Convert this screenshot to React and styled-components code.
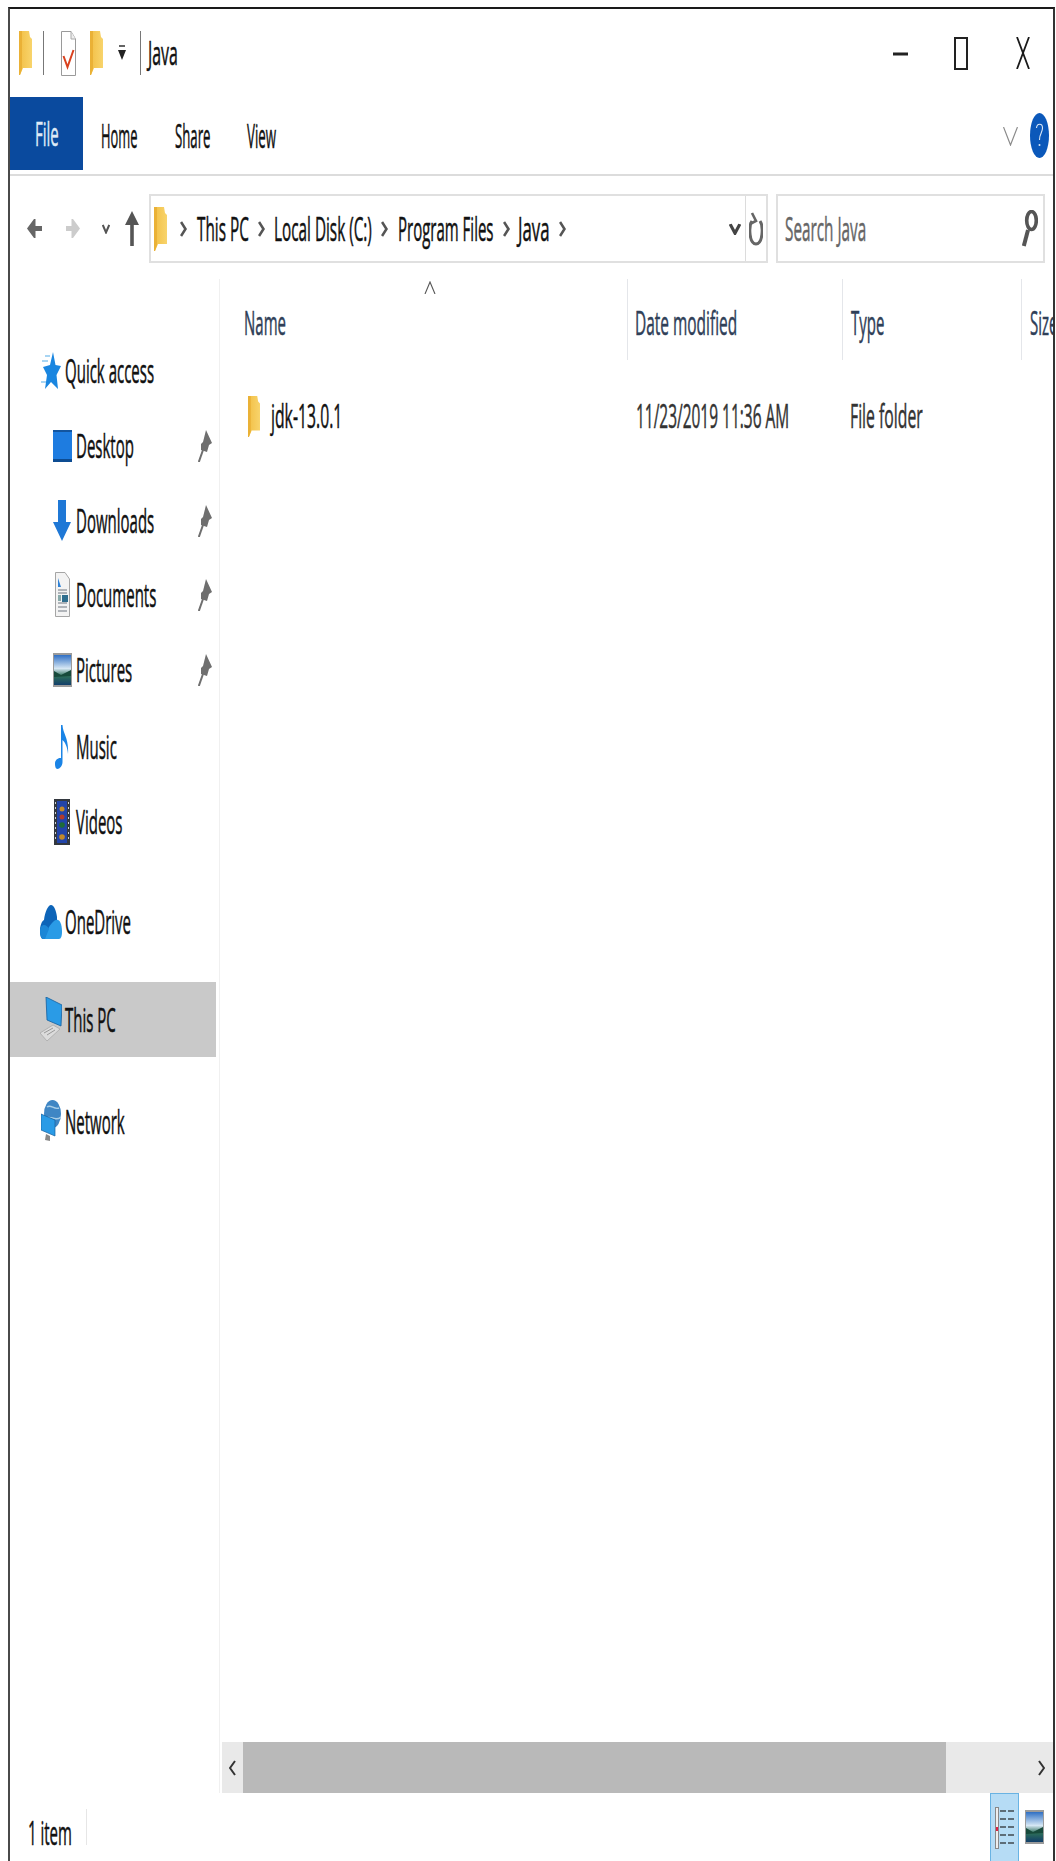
import React from "react";
import styled, { createGlobalStyle } from "styled-components";

const Global = createGlobalStyle`
  html, body { margin: 0; padding: 0; background: #fff; overflow: hidden; }
  #root { width: 1056px; height: 1861px; }
`;

const Win = styled.div`
  box-sizing: border-box;
  width: 1047px;
  height: 1854px;
  margin: 7px 0 0 8px;
  border-top: 2px solid #1a1a1a;
  border-left: 2px solid #4a4a4a;
  border-right: 2px solid #333;
  display: flex;
  flex-direction: column;
  font-family: "Open Sans", "Liberation Sans", sans-serif;
  color: #111;
  overflow: hidden;
`;

const LabelBox = styled.span`
  display: block;
  flex: none;
  width: ${(p) => p.$w}px;
  margin-left: ${(p) => p.$ml || 0}px;
  height: 42px;
  line-height: 42px;
  font-size: 32px;
  color: ${(p) => p.$color || "inherit"};
  white-space: nowrap;
`;

// The window is stretched tall, so each text run is condensed along x only.
const Squeezed = styled.span`
  display: inline-block;
  -webkit-text-stroke: 0.5px currentColor;
  transform: scaleX(${(p) => p.$sx});
  transform-origin: 0 50%;
`;

const Label = ({ w, ml, color, fit = 1, children }) => (
  <LabelBox $w={w} $ml={ml} $color={color}>
    <Squeezed $sx={0.469 * fit}>{children}</Squeezed>
  </LabelBox>
);

const Slot = styled.span`
  display: block;
  flex: none;
  line-height: 0;
  margin-left: ${(p) => p.$ml || 0}px;
  margin-right: ${(p) => p.$mr || 0}px;
  margin-top: ${(p) => p.$mt || 0}px;
  ${(p) => (p.$auto ? "margin-left: auto;" : "")}
`;

const TitleBar = styled.div`
  flex: none;
  height: 88px;
  display: flex;
  align-items: center;
  padding-right: 23px;
`;

const VSep = styled.span`
  display: block;
  flex: none;
  width: 1px;
  height: 44px;
  background: #777;
  margin-left: ${(p) => p.$ml}px;
`;

const Ribbon = styled.div`
  flex: none;
  box-sizing: border-box;
  height: 79px;
  display: flex;
  align-items: flex-start;
  border-bottom: 2px solid #dcdcdc;
  padding-right: 4px;
`;

const FileTab = styled.div`
  flex: none;
  width: 75px;
  height: 73px;
  margin-left: -2px;
  padding-left: 27px;
  box-sizing: border-box;
  background: #0a4a9e;
  color: #dfeaf7;
  display: flex;
  align-items: center;
`;

const Tab = styled.div`
  height: 78px;
  display: flex;
  align-items: center;
`;

const AddressRow = styled.div`
  flex: none;
  box-sizing: border-box;
  height: 103px;
  padding: 18px 0 16px;
  display: flex;
  align-items: center;
`;

const Field = styled.div`
  flex: none;
  box-sizing: border-box;
  height: 69px;
  width: ${(p) => p.$w}px;
  margin-left: ${(p) => p.$ml}px;
  border: 2px solid #e0e0e0;
  display: flex;
  align-items: center;
`;

const Refresh = styled.div`
  flex: none;
  box-sizing: border-box;
  width: 21px;
  height: 100%;
  margin-left: 4px;
  border-left: 1px solid #dcdcdc;
  display: flex;
  align-items: center;
  justify-content: center;
`;

const Body = styled.div`
  flex: 1;
  min-height: 0;
  display: flex;
`;

const Sidebar = styled.nav`
  flex: none;
  box-sizing: border-box;
  width: 210px;
  padding-top: 54px;
  border-right: 1px solid #f0f0f0;
`;

const NavRow = styled.div`
  box-sizing: border-box;
  width: 206px;
  height: 75px;
  display: flex;
  align-items: center;
  margin-top: ${(p) => p.$mt || 0}px;
  padding-left: ${(p) => (p.$child ? 42 : 30)}px;
  padding-right: 4px;
  background: ${(p) => (p.$active ? "#c9c9c9" : "transparent")};
`;

const IconSlot = styled.span`
  flex: none;
  width: ${(p) => (p.$child ? 20 : 22)}px;
  margin-right: ${(p) => (p.$child ? 4 : 3)}px;
  display: flex;
  justify-content: center;
  align-items: center;
  line-height: 0;
`;

const Main = styled.main`
  flex: 1;
  min-width: 0;
  display: flex;
  flex-direction: column;
  overflow: hidden;
`;

const Columns = styled.div`
  display: grid;
  grid-template-columns: 407px 215px 179px 1fr;
  height: ${(p) => p.$h}px;
  margin-top: ${(p) => p.$mt || 0}px;
`;

const HeadCell = styled.div`
  position: relative;
  display: flex;
  align-items: center;
  padding-top: 6px;
  padding-left: ${(p) => p.$pl}px;
  border-left: ${(p) => (p.$sep ? "1px solid #e4e6ea" : "none")};
  color: #2f4058;
  overflow: hidden;
`;

const SortMark = styled.span`
  position: absolute;
  left: 204px;
  top: 2px;
  line-height: 0;
`;

const Cell = styled.div`
  display: flex;
  align-items: center;
  padding-left: ${(p) => p.$pl}px;
  color: ${(p) => p.$color || "inherit"};
`;

const Files = styled.div`
  flex: 1;
`;

const HScroll = styled.div`
  flex: none;
  height: 51px;
  margin-left: 2px;
  background: #e9e9e9;
  display: flex;
  align-items: center;
`;

const Thumb = styled.div`
  flex: none;
  align-self: stretch;
  width: 703px;
  margin-left: 7px;
  background: #b9b9b9;
`;

const StatusBar = styled.footer`
  flex: none;
  height: 68px;
  display: flex;
  align-items: center;
  padding-right: 9px;
`;

const StatusText = styled.div`
  flex: none;
  padding-top: 12px;
`;

const StatusSep = styled.span`
  display: block;
  flex: none;
  width: 1px;
  height: 36px;
  margin-left: 14px;
  background: #e6e6e6;
`;

const ViewBtn = styled.div`
  flex: none;
  box-sizing: border-box;
  width: 29px;
  height: 68px;
  margin-left: auto;
  background: #b6dcf5;
  border: 1px solid #69b3e3;
  border-bottom: none;
  display: flex;
  align-items: center;
  justify-content: center;
`;

/* ---------- icons ---------- */

const Defs = () => (
  <svg width="0" height="0" style={{ position: "absolute" }}>
    <defs>
      <linearGradient id="fold" x1="0" y1="0" x2="1" y2="0">
        <stop offset="0" stopColor="#f2bf45" />
        <stop offset="1" stopColor="#f8d46c" />
      </linearGradient>
      <linearGradient id="sky" x1="0" y1="0" x2="0" y2="1">
        <stop offset="0" stopColor="#2f6fc4" />
        <stop offset=".45" stopColor="#d6e7f4" />
        <stop offset=".7" stopColor="#2d6e58" />
        <stop offset="1" stopColor="#123e6a" />
      </linearGradient>
    </defs>
  </svg>
);

const Folder = ({ w = 13, h = 44 }) => (
  <svg width={w} height={h} viewBox="0 0 13 44" preserveAspectRatio="none">
    <path d="M0 0H10L11 6 13 8V37H4L1 44H0Z" fill="url(#fold)" />
    <path d="M0 0H3V38L1 44H0Z" fill="#eab136" />
  </svg>
);

const DocCheck = () => (
  <svg width="15" height="45" viewBox="0 0 15 45">
    <path d="M.5.5H10L14.5 8V44.5H.5Z" fill="#fff" stroke="#9a9a9a" />
    <path d="M10 .5V8H14.5" fill="#eee" stroke="#aaa" />
    <path d="M2.5 25L6.5 36 12.5 19" fill="none" stroke="#d9411e" strokeWidth="2" />
  </svg>
);

const QatDrop = () => (
  <svg width="10" height="16" viewBox="0 0 10 16">
    <path d="M2 1H8" stroke="#222" strokeWidth="1.4" />
    <path d="M1 5H9L5 15Z" fill="#222" />
  </svg>
);

const Minimize = () => (
  <svg width="15" height="4" viewBox="0 0 15 4">
    <rect width="15" height="3" y=".5" fill="#222" />
  </svg>
);

const Maximize = () => (
  <svg width="14" height="33" viewBox="0 0 14 33">
    <rect x="1" y="1" width="12" height="31" fill="none" stroke="#222" strokeWidth="2" />
  </svg>
);

const Close = () => (
  <svg width="14" height="32" viewBox="0 0 14 32">
    <path d="M1 0L13 32M13 0L1 32" stroke="#1a1a1a" strokeWidth="1.8" fill="none" />
  </svg>
);

const ChevronV = () => (
  <svg width="15" height="19" viewBox="0 0 15 19">
    <path d="M.5 0L7.5 18 14.5 0" stroke="#8a8a8a" strokeWidth="1.2" fill="none" />
  </svg>
);

const HelpBadge = () => (
  <svg width="19" height="45" viewBox="0 0 19 45">
    <ellipse cx="9.5" cy="22.5" rx="9.5" ry="22.5" fill="#0b58ba" />
    <path d="M6.5 15C7 10 12.5 10 12.5 15 12.5 20 9.5 20 9.5 27" stroke="#dbe8f7" fill="none" strokeWidth="1.1" />
    <circle cx="9.5" cy="32" r="1" fill="#dbe8f7" />
  </svg>
);

const ArrowLeft = () => (
  <svg width="15" height="19" viewBox="0 0 15 19">
    <path d="M0 9.5L7 0H8.5V7H15V12H8.5V19H7Z" fill="#666" />
  </svg>
);

const ArrowRight = () => (
  <svg width="14" height="19" viewBox="0 0 14 19">
    <path d="M14 9.5L7 0H5.5V7H0V12H5.5V19H7Z" fill="#ccc" />
  </svg>
);

const SmallDown = ({ w = 8, h = 10, stroke = 2, color = "#555" }) => (
  <svg width={w} height={h} viewBox="0 0 8 10" preserveAspectRatio="none">
    <path d="M.8 1L4 8.5 7.2 1" stroke={color} strokeWidth={stroke} fill="none" />
  </svg>
);

const ArrowUp = () => (
  <svg width="14" height="35" viewBox="0 0 14 35">
    <path d="M7 0L14 14H8.8V35H5.2V14H0Z" fill="#555" />
  </svg>
);

const Crumb = () => (
  <svg width="7" height="16" viewBox="0 0 7 16">
    <path d="M1 1L5.5 8 1 15" stroke="#555" strokeWidth="2.6" fill="none" />
  </svg>
);

const RefreshIcon = () => (
  <svg width="14" height="34" viewBox="0 0 14 34">
    <path d="M3 9C-.5 14 0 32 7 32 14 32 14.5 14 11 9" stroke="#666" strokeWidth="3" fill="none" />
    <path d="M3 1L7 9 1 12" stroke="#666" strokeWidth="2.6" fill="none" />
  </svg>
);

const Magnifier = () => (
  <svg width="16" height="37" viewBox="0 0 16 37">
    <ellipse cx="9.5" cy="10.5" rx="4.8" ry="9" fill="none" stroke="#555" strokeWidth="3.6" />
    <path d="M6 20L1.8 36" stroke="#555" strokeWidth="4" />
  </svg>
);

const Pin = () => (
  <svg width="14" height="32" viewBox="0 0 14 32">
    <path d="M8 0L14 13 11 15 9 22 3 20 3 14 5 12Z" fill="#6f6f6f" />
    <path d="M5 20L.8 32" stroke="#6f6f6f" strokeWidth="2" />
  </svg>
);

const Star = () => (
  <svg width="20" height="37" viewBox="0 0 20 37">
    <path d="M12 0L14.5 13 20 14 15.5 23 17 37 10 30 4 37 6 23 2 15 9 13Z" fill="#1a86e0" />
    <path d="M4 4H9M1 9H7M0 30H5" stroke="#8cc8f0" strokeWidth="1.4" />
  </svg>
);

const DesktopIcon = () => (
  <svg width="19" height="32" viewBox="0 0 19 32">
    <rect width="19" height="32" fill="#1e7ce0" />
    <rect y="29" width="19" height="3" fill="#0d4c92" />
    <rect width="19" height="2" fill="#13559f" />
  </svg>
);

const DownloadIcon = () => (
  <svg width="18" height="41" viewBox="0 0 18 41">
    <path d="M5 0H13V22H18L9 41 0 22H5Z" fill="#1f78d6" />
  </svg>
);

const DocumentsIcon = () => (
  <svg width="15" height="45" viewBox="0 0 15 45">
    <path d="M.5.5H10L14.5 7V44.5H.5Z" fill="#f3f3f3" stroke="#a5a5a5" />
    <path d="M3 6L6 15H3Z" fill="#2f82d6" />
    <path d="M3 18H12M3 21H12M3 31H12M3 35H12M3 39H12" stroke="#9aa0a6" strokeWidth="1.4" />
    <rect x="7" y="23" width="6" height="7" fill="#2f6e8e" />
    <rect x="3" y="23" width="3" height="6" fill="#8aa" />
  </svg>
);

const Landscape = ({ w = 19, h = 34 }) => (
  <svg width={w} height={h} viewBox="0 0 19 34" preserveAspectRatio="none">
    <rect width="19" height="34" fill="#9b9b9b" />
    <rect x="1" y="2" width="17" height="30" fill="url(#sky)" />
    <path d="M1 18L8 22 18 17V23L1 24Z" fill="#174a3b" />
  </svg>
);

const MusicIcon = () => (
  <svg width="14" height="44" viewBox="0 0 14 44">
    <path d="M6 0H7.5C8 9 14 13 13 29 12.5 22 10 17 7.5 15V37C7.5 41 4.5 44 2.5 44 .5 44 0 41 0 38.5 0 35 3 32.5 6 33Z" fill="#1a84e6" />
  </svg>
);

const VideosIcon = () => (
  <svg width="16" height="46" viewBox="0 0 16 46">
    <rect width="16" height="46" fill="#33383f" />
    <rect x="3" y="2" width="10" height="42" fill="#2244a8" />
    <circle cx="8" cy="10" r="2.5" fill="#c28a2a" />
    <circle cx="8" cy="18" r="2.5" fill="#b23b2a" />
    <circle cx="8" cy="26" r="2.8" fill="#1e6b38" />
    <circle cx="8" cy="38" r="2.8" fill="#c28a2a" />
    <path d="M1.5 3V43M14.5 3V43" stroke="#cfd2d6" strokeWidth="1" strokeDasharray="2 3" />
  </svg>
);

const CloudIcon = () => (
  <svg width="22" height="34" viewBox="0 0 22 34">
    <path d="M0 26C0 20 2 16 4 15 5 7 8 0 11 0 14 0 16 5 17 12L17 22 5 34H3C1 34 0 30 0 26Z" fill="#0d64b8" />
    <path d="M4 34L9 22C12 18 15 14 18 15 21 16 22 22 22 27 22 31 21 34 19 34Z" fill="#2a9be6" />
    <path d="M3 34C1 34 0 30 0 26 0 22 2 20 4 20 6 20 8 22 9 24L5 34Z" fill="#1c86d6" />
  </svg>
);

const LaptopIcon = () => (
  <svg width="22" height="46" viewBox="0 0 22 46">
    <path d="M6 0L22 8 21 29 7 23Z" fill="#2a9be6" stroke="#14609f" strokeWidth=".8" />
    <path d="M0 36L13 28 20 32 7 44Z" fill="#dcdcdc" stroke="#aaa" strokeWidth=".8" />
    <path d="M4 36L13 31M7 38L15 33" stroke="#999" strokeWidth="1" />
  </svg>
);

const NetworkIcon = () => (
  <svg width="20" height="44" viewBox="0 0 20 44">
    <ellipse cx="11.5" cy="14" rx="8.5" ry="14" fill="#3f86c4" />
    <path d="M6 7C10 4 13 10 18 8M5 18C10 15 14 22 20 17" stroke="#a9cfe8" strokeWidth="1.4" fill="none" />
    <path d="M0 14L14 20V36L0 30Z" fill="#2a9be6" stroke="#14609f" strokeWidth=".7" />
    <path d="M5 34L9 36V41L4 40Z" fill="#888" />
  </svg>
);

const SortCaret = () => (
  <svg width="12" height="13" viewBox="0 0 12 13">
    <path d="M1 13L6 1 11 13" stroke="#555" strokeWidth="1.1" fill="none" />
  </svg>
);

const ScrollArrow = ({ flip }) => (
  <svg width="7" height="16" viewBox="0 0 7 16">
    <path d={flip ? "M1 1L6 8 1 15" : "M6 1L1 8 6 15"} stroke="#333" strokeWidth="2" fill="none" />
  </svg>
);

const DetailsIcon = () => (
  <svg width="19" height="42" viewBox="0 0 19 42">
    <rect x=".5" y=".5" width="3" height="41" fill="#eee" stroke="#888" />
    <rect x="1" y="20" width="2" height="4" fill="#d24" />
    {[3, 11, 19, 27, 35].map((y) => (
      <g key={y}>
        <rect x="5" y={y} width="6" height="2" fill="#5d6d78" />
        <rect x="13" y={y} width="6" height="2" fill="#5d6d78" />
      </g>
    ))}
  </svg>
);

const navItems = [
  { name: "Quick access", w: 90, icon: <Star /> },
  { name: "Desktop", w: 58, icon: <DesktopIcon />, child: true, pin: true },
  { name: "Downloads", w: 78, icon: <DownloadIcon />, child: true, pin: true },
  { name: "Documents", w: 81, icon: <DocumentsIcon />, child: true, pin: true, mt: -1 },
  { name: "Pictures", w: 55, icon: <Landscape />, child: true, pin: true },
  { name: "Music", w: 42, icon: <MusicIcon />, child: true, mt: 2 },
  { name: "Videos", w: 47, icon: <VideosIcon />, child: true },
  { name: "OneDrive", w: 67, icon: <CloudIcon />, mt: 25 },
  { name: "This PC", w: 52, icon: <LaptopIcon />, mt: 23, active: true },
  { name: "Network", w: 60, icon: <NetworkIcon />, mt: 27 },
];

export default function App() {
  return (
    <>
      <Global />
      <Defs />
      <Win>
        <TitleBar>
          <Slot $ml={9}><Folder /></Slot>
          <VSep $ml={11} />
          <Slot $ml={17}><DocCheck /></Slot>
          <Slot $ml={14}><Folder /></Slot>
          <Slot $ml={14}><QatDrop /></Slot>
          <VSep $ml={13} />
          <Label ml={7} w={30} fit={1.06}>Java</Label>
          <Slot $auto><Minimize /></Slot>
          <Slot $ml={46}><Maximize /></Slot>
          <Slot $ml={48}><Close /></Slot>
        </TitleBar>

        <Ribbon>
          <FileTab><Label w={22}>File</Label></FileTab>
          <Tab><Label ml={18} w={37} fit={0.86}>Home</Label></Tab>
          <Tab><Label ml={37} w={35} fit={0.88}>Share</Label></Tab>
          <Tab><Label ml={37} w={30} fit={0.89}>View</Label></Tab>
          <Slot $auto $mt={30}><ChevronV /></Slot>
          <Slot $ml={12} $mt={16}><HelpBadge /></Slot>
        </Ribbon>

        <AddressRow>
          <Slot $ml={17}><ArrowLeft /></Slot>
          <Slot $ml={24}><ArrowRight /></Slot>
          <Slot $ml={22}><SmallDown /></Slot>
          <Slot $ml={15}><ArrowUp /></Slot>
          <Field $ml={10} $w={619}>
            <Slot $ml={3}><Folder /></Slot>
            <Slot $ml={13}><Crumb /></Slot>
            <Label ml={10} w={51} fit={1.02}>This PC</Label>
            <Slot $ml={10}><Crumb /></Slot>
            <Label ml={9} w={98} fit={1.02}>Local Disk (C:)</Label>
            <Slot $ml={9}><Crumb /></Slot>
            <Label ml={10} w={95}>Program Files</Label>
            <Slot $ml={10}><Crumb /></Slot>
            <Label ml={8} w={30} fit={1.12}>Java</Label>
            <Slot $ml={11}><Crumb /></Slot>
            <Slot $auto><SmallDown w={12} h={12} stroke={2.2} color="#444" /></Slot>
            <Refresh><RefreshIcon /></Refresh>
          </Field>
          <Field $ml={8} $w={269}>
            <Label ml={7} w={81} color="#666" fit={1.02}>Search Java</Label>
            <Slot $auto $mr={5}><Magnifier /></Slot>
          </Field>
        </AddressRow>

        <Body>
          <Sidebar>
            {navItems.map((item) => (
              <NavRow key={item.name} $child={item.child} $mt={item.mt} $active={item.active}>
                <IconSlot $child={item.child}>{item.icon}</IconSlot>
                <Label w={item.w}>{item.name}</Label>
                {item.pin && <Slot $auto><Pin /></Slot>}
              </NavRow>
            ))}
          </Sidebar>

          <Main>
            <Columns $h={81}>
              <HeadCell $pl={24}>
                <Label w={43}>Name</Label>
                <SortMark><SortCaret /></SortMark>
              </HeadCell>
              <HeadCell $pl={7} $sep><Label w={102} fit={1.03}>Date modified</Label></HeadCell>
              <HeadCell $pl={8} $sep><Label w={34}>Type</Label></HeadCell>
              <HeadCell $pl={8} $sep><Label w={30}>Size</Label></HeadCell>
            </Columns>
            <Files>
              <Columns $h={56} $mt={28}>
                <Cell $pl={28}>
                  <Folder w={12} h={41} />
                  <Label ml={11} w={70} fit={1.05}>jdk-13.0.1</Label>
                </Cell>
                <Cell $pl={9} $color="#333"><Label w={153} fit={1.03}>11/23/2019 11:36 AM</Label></Cell>
                <Cell $pl={8} $color="#333"><Label w={73} fit={1.05}>File folder</Label></Cell>
                <Cell $pl={8} />
              </Columns>
            </Files>
            <HScroll>
              <Slot $ml={7}><ScrollArrow /></Slot>
              <Thumb />
              <Slot $auto $mr={8}><ScrollArrow flip /></Slot>
            </HScroll>
          </Main>
        </Body>

        <StatusBar>
          <StatusText><Label ml={18} w={44}>1 item</Label></StatusText>
          <StatusSep />
          <ViewBtn><DetailsIcon /></ViewBtn>
          <Slot $ml={6}><Landscape w={19} h={34} /></Slot>
        </StatusBar>
      </Win>
    </>
  );
}
